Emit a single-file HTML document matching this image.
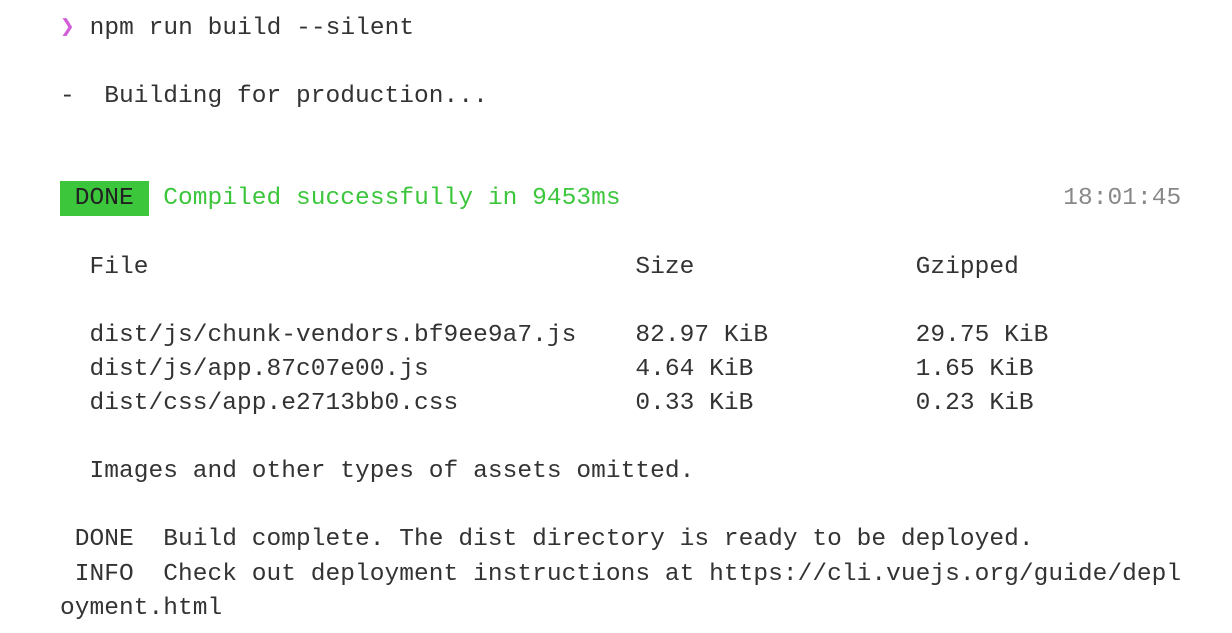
<!DOCTYPE html>
<html><head><meta charset="utf-8"><style>
html,body{margin:0;padding:0;background:#fff;width:1232px;height:633px;overflow:hidden}
pre{margin:0;position:absolute;left:60px;top:12px;font-family:"Liberation Mono","DejaVu Sans Mono",monospace;font-size:24.5px;line-height:34.1px;color:#333;white-space:pre;letter-spacing:0.05px}
.p{color:#d35fd8}
.g{color:#3cc63c}
.b{background:#3cc63c;color:#222;box-shadow:0 4px 0 #3cc63c,0 -4px 0 #3cc63c}
.t{color:#888}
</style></head><body><pre><span class="p">❯</span> npm run build --silent

-  Building for production...


<span class="b"> DONE </span> <span class="g">Compiled successfully in 9453ms</span>                              <span class="t">18:01:45</span>

  File                                 Size               Gzipped

  dist/js/chunk-vendors.bf9ee9a7.js    82.97 KiB          29.75 KiB
  dist/js/app.87c07e00.js              4.64 KiB           1.65 KiB
  dist/css/app.e2713bb0.css            0.33 KiB           0.23 KiB

  Images and other types of assets omitted.

 DONE  Build complete. The dist directory is ready to be deployed.
 INFO  Check out deployment instructions at https://cli.vuejs.org/guide/depl
oyment.html</pre></body></html>
